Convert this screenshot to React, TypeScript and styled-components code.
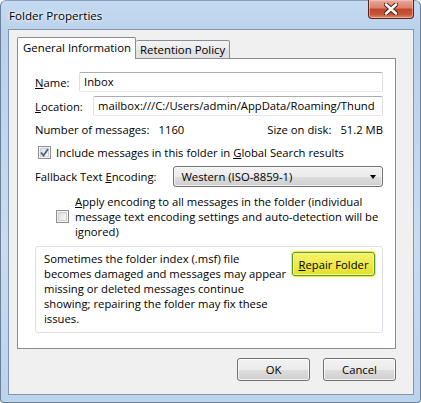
import React from "react";
import styled, { createGlobalStyle } from "styled-components";

const Global = createGlobalStyle`
  body {
    margin: 0;
    background: #fff;
    font-family: "Open Sans", "Noto Sans", sans-serif;
    font-size: 11.25px;
    color: #000;
  }
`;

const Window = styled.div`
  width: 421px;
  height: 403px;
  box-sizing: border-box;
  display: flex;
  flex-direction: column;
  padding: 0 6px 7px 7px;
  background: linear-gradient(180deg, #c4daf1 0%, #b9d1ea 8%, #c9dcf0 60%, #bcd3ec 100%);
  border: 1px solid #6b7f98;
  border-top-color: #8aa0ba;
  border-radius: 6px 6px 4px 4px;
`;

const TitleBar = styled.div`
  height: 28px;
  flex: none;
  display: flex;
  align-items: flex-start;
  justify-content: space-between;
`;

const Title = styled.span`
  padding: 7px 0 0 1px;
  font-size: 11.6px;
  color: #000;
  text-shadow: 0 0 6px #fff, 0 0 3px #fff;
`;

const CloseButton = styled.div`
  width: 46px;
  height: 19px;
  margin-top: -1px;
  display: flex;
  align-items: center;
  justify-content: center;
  box-sizing: border-box;
  border: 1px solid #5a241b;
  border-top: none;
  border-radius: 0 0 4px 4px;
  background: linear-gradient(180deg, #e9a99b 0%, #d9806b 45%, #c2452b 50%, #c65538 80%, #df8d6f 100%);
  box-shadow: inset 0 0 0 1px rgba(255, 210, 200, 0.5);
`;

const Client = styled.div`
  flex: 1;
  display: flex;
  flex-direction: column;
  background: #f0f0f0;
  border: 1px solid #8396b0;
  padding: 8px 17px 0 8px;
`;

const TabStrip = styled.div`
  display: flex;
  align-items: flex-end;
  height: 21px;
  position: relative;
  z-index: 1;
  margin-bottom: -1px;
`;

const Tab = styled.div<{ $active?: boolean }>`
  box-sizing: border-box;
  height: ${(p) => (p.$active ? 22 : 19)}px;
  padding: ${(p) => (p.$active ? "2px 4px 0 5px" : "1px 4px 0 4px")};
  border: 1px solid #898c95;
  border-bottom: ${(p) => (p.$active ? "none" : "1px solid #898c95")};
  border-left: ${(p) => (p.$active ? "1px solid #898c95" : "none")};
  border-radius: 2px 2px 0 0;
  background: ${(p) =>
    p.$active ? "#fff" : "linear-gradient(180deg, #f3f3f3 0%, #ebebeb 50%, #dedede 51%, #e4e4e4 100%)"};
  white-space: nowrap;
  font-size: 11.4px;
`;

const Panel = styled.div`
  height: 291px;
  box-sizing: border-box;
  background: #fff;
  border: 1px solid #898c95;
  padding: 13px 12px 0 17px;
  display: flex;
  flex-direction: column;
`;

const FieldRow = styled.div<{ $mt?: number }>`
  display: flex;
  align-items: center;
  margin-top: ${(p) => p.$mt ?? 0}px;
`;

const Label = styled.span<{ $w?: number }>`
  width: ${(p) => (p.$w ? `${p.$w}px` : "auto")};
  flex: none;
  white-space: nowrap;
`;

const U = styled.span`
  text-decoration: underline;
`;

const TextBox = styled.div`
  flex: 1;
  height: 20px;
  box-sizing: border-box;
  border: 1px solid #abadb3;
  border-left-color: #dbdfe6;
  border-right-color: #dbdfe6;
  border-bottom-color: #e3e9ef;
  border-radius: 2px;
  padding: 1px 0 0 4px;
  line-height: 16px;
  white-space: nowrap;
  overflow: hidden;
  background: #fff;
`;

const StatsRow = styled.div`
  display: flex;
  margin-top: 6px;
  height: 16px;
  line-height: 16px;
`;

const StatValue = styled.span<{ $w?: number }>`
  width: ${(p) => (p.$w ? `${p.$w}px` : "auto")};
  white-space: nowrap;
`;

const CheckRow = styled.label`
  display: flex;
  align-items: center;
  gap: 5px;
  margin-top: 7px;
  padding-left: 3px;
`;

const Box = styled.span`
  width: 13px;
  height: 13px;
  flex: none;
  box-sizing: border-box;
  border: 1px solid #8e8f8f;
  background: linear-gradient(135deg, #d8d8d8 0%, #f0f0f0 60%, #fbfbfb 100%);
  box-shadow: inset 0 0 0 1px #f4f4f4, inset 0 0 0 2px #d0d0d0;
  display: flex;
  align-items: center;
  justify-content: center;
`;

const Select = styled.div`
  width: 212px;
  height: 21px;
  box-sizing: border-box;
  margin-left: 17px;
  border: 1px solid #707070;
  border-radius: 3px;
  background: linear-gradient(180deg, #f2f2f2 0%, #ebebeb 50%, #dddddd 51%, #cfcfcf 100%);
  box-shadow: inset 0 0 0 1px rgba(255, 255, 255, 0.7);
  display: flex;
  align-items: center;
  justify-content: space-between;
  padding: 0 6px 0 7px;
`;

const Arrow = styled.span`
  width: 0;
  height: 0;
  border-left: 3.5px solid transparent;
  border-right: 3.5px solid transparent;
  border-top: 4px solid #000;
`;

const ApplyRow = styled.label`
  display: flex;
  align-items: center;
  gap: 6px;
  margin-top: 7px;
  padding-left: 21px;
  line-height: 15px;
`;

const Group = styled.div`
  margin-top: 7px;
  height: 87px;
  box-sizing: border-box;
  border: 1px solid #dde2e8;
  border-radius: 3px;
  display: flex;
  justify-content: space-between;
  padding: 4px 7px 0 8px;
  line-height: 15px;
`;

const RepairButton = styled.div`
  width: 83px;
  height: 24px;
  box-sizing: border-box;
  margin-top: 1px;
  border: 1px solid #5a9a2b;
  border-radius: 3px;
  background: linear-gradient(180deg, #f6f36a 0%, #eeea4a 50%, #e4de2c 100%);
  box-shadow: 0 0 0 1px #f3ef2a, inset 0 0 0 1px #faf78a;
  display: flex;
  align-items: center;
  justify-content: center;
  white-space: nowrap;
`;

const Footer = styled.div`
  display: flex;
  justify-content: flex-end;
  gap: 13px;
  margin-top: 9px;
`;

const Button = styled.div`
  width: 73px;
  height: 23px;
  box-sizing: border-box;
  border: 1px solid #707070;
  border-radius: 3px;
  background: linear-gradient(180deg, #f2f2f2 0%, #ebebeb 50%, #dddddd 51%, #cfcfcf 100%);
  box-shadow: inset 0 0 0 1px rgba(255, 255, 255, 0.75);
  display: flex;
  align-items: center;
  justify-content: center;
`;

const CloseIcon = () => (
  <svg width="14" height="12" viewBox="0 0 14 12">
    <path d="M2 1.5 L12 10.5 M12 1.5 L2 10.5" stroke="#4a1a12" strokeWidth="4.4" strokeLinecap="round" />
    <path d="M2 1.5 L12 10.5 M12 1.5 L2 10.5" stroke="#fff" strokeWidth="2.6" strokeLinecap="round" />
  </svg>
);

const Check = () => (
  <svg width="9" height="9" viewBox="0 0 9 9">
    <path d="M1 4.5 L3.5 7.5 L8 1" fill="none" stroke="#4d6185" strokeWidth="1.8" />
  </svg>
);

export default function App() {
  return (
    <>
      <Global />
      <Window>
        <TitleBar>
          <Title>Folder Properties</Title>
          <CloseButton>
            <CloseIcon />
          </CloseButton>
        </TitleBar>
        <Client>
          <TabStrip>
            <Tab $active>General Information</Tab>
            <Tab>Retention Policy</Tab>
          </TabStrip>
          <Panel>
            <FieldRow>
              <Label $w={44}>
                <U>N</U>ame:
              </Label>
              <TextBox>Inbox</TextBox>
            </FieldRow>
            <FieldRow $mt={4}>
              <Label $w={58}>
                <U>L</U>ocation:
              </Label>
              <TextBox>mailbox:///C:/Users/admin/AppData/Roaming/Thund</TextBox>
            </FieldRow>
            <StatsRow>
              <StatValue $w={125}>Number of messages:</StatValue>
              <StatValue $w={110}>1160</StatValue>
              <StatValue $w={74}>Size on disk:</StatValue>
              <StatValue>51.2 MB</StatValue>
            </StatsRow>
            <CheckRow>
              <Box>
                <Check />
              </Box>
              <span>
                Include messages in this folder in <U>G</U>lobal Search results
              </span>
            </CheckRow>
            <FieldRow $mt={6}>
              <Label>
                Fallback Text <U>E</U>ncoding:
              </Label>
              <Select>
                <span>Western (ISO-8859-1)</span>
                <Arrow />
              </Select>
            </FieldRow>
            <ApplyRow>
              <Box />
              <span>
                <U>A</U>pply encoding to all messages in the folder (individual
                <br />
                message text encoding settings and auto-detection will be
                <br />
                ignored)
              </span>
            </ApplyRow>
            <Group>
              <span>
                Sometimes the folder index (.msf) file
                <br />
                becomes damaged and messages may appear
                <br />
                missing or deleted messages continue
                <br />
                showing; repairing the folder may fix these
                <br />
                issues.
              </span>
              <RepairButton>
                <U>R</U>epair Folder
              </RepairButton>
            </Group>
          </Panel>
          <Footer>
            <Button>OK</Button>
            <Button>Cancel</Button>
          </Footer>
        </Client>
      </Window>
    </>
  );
}
